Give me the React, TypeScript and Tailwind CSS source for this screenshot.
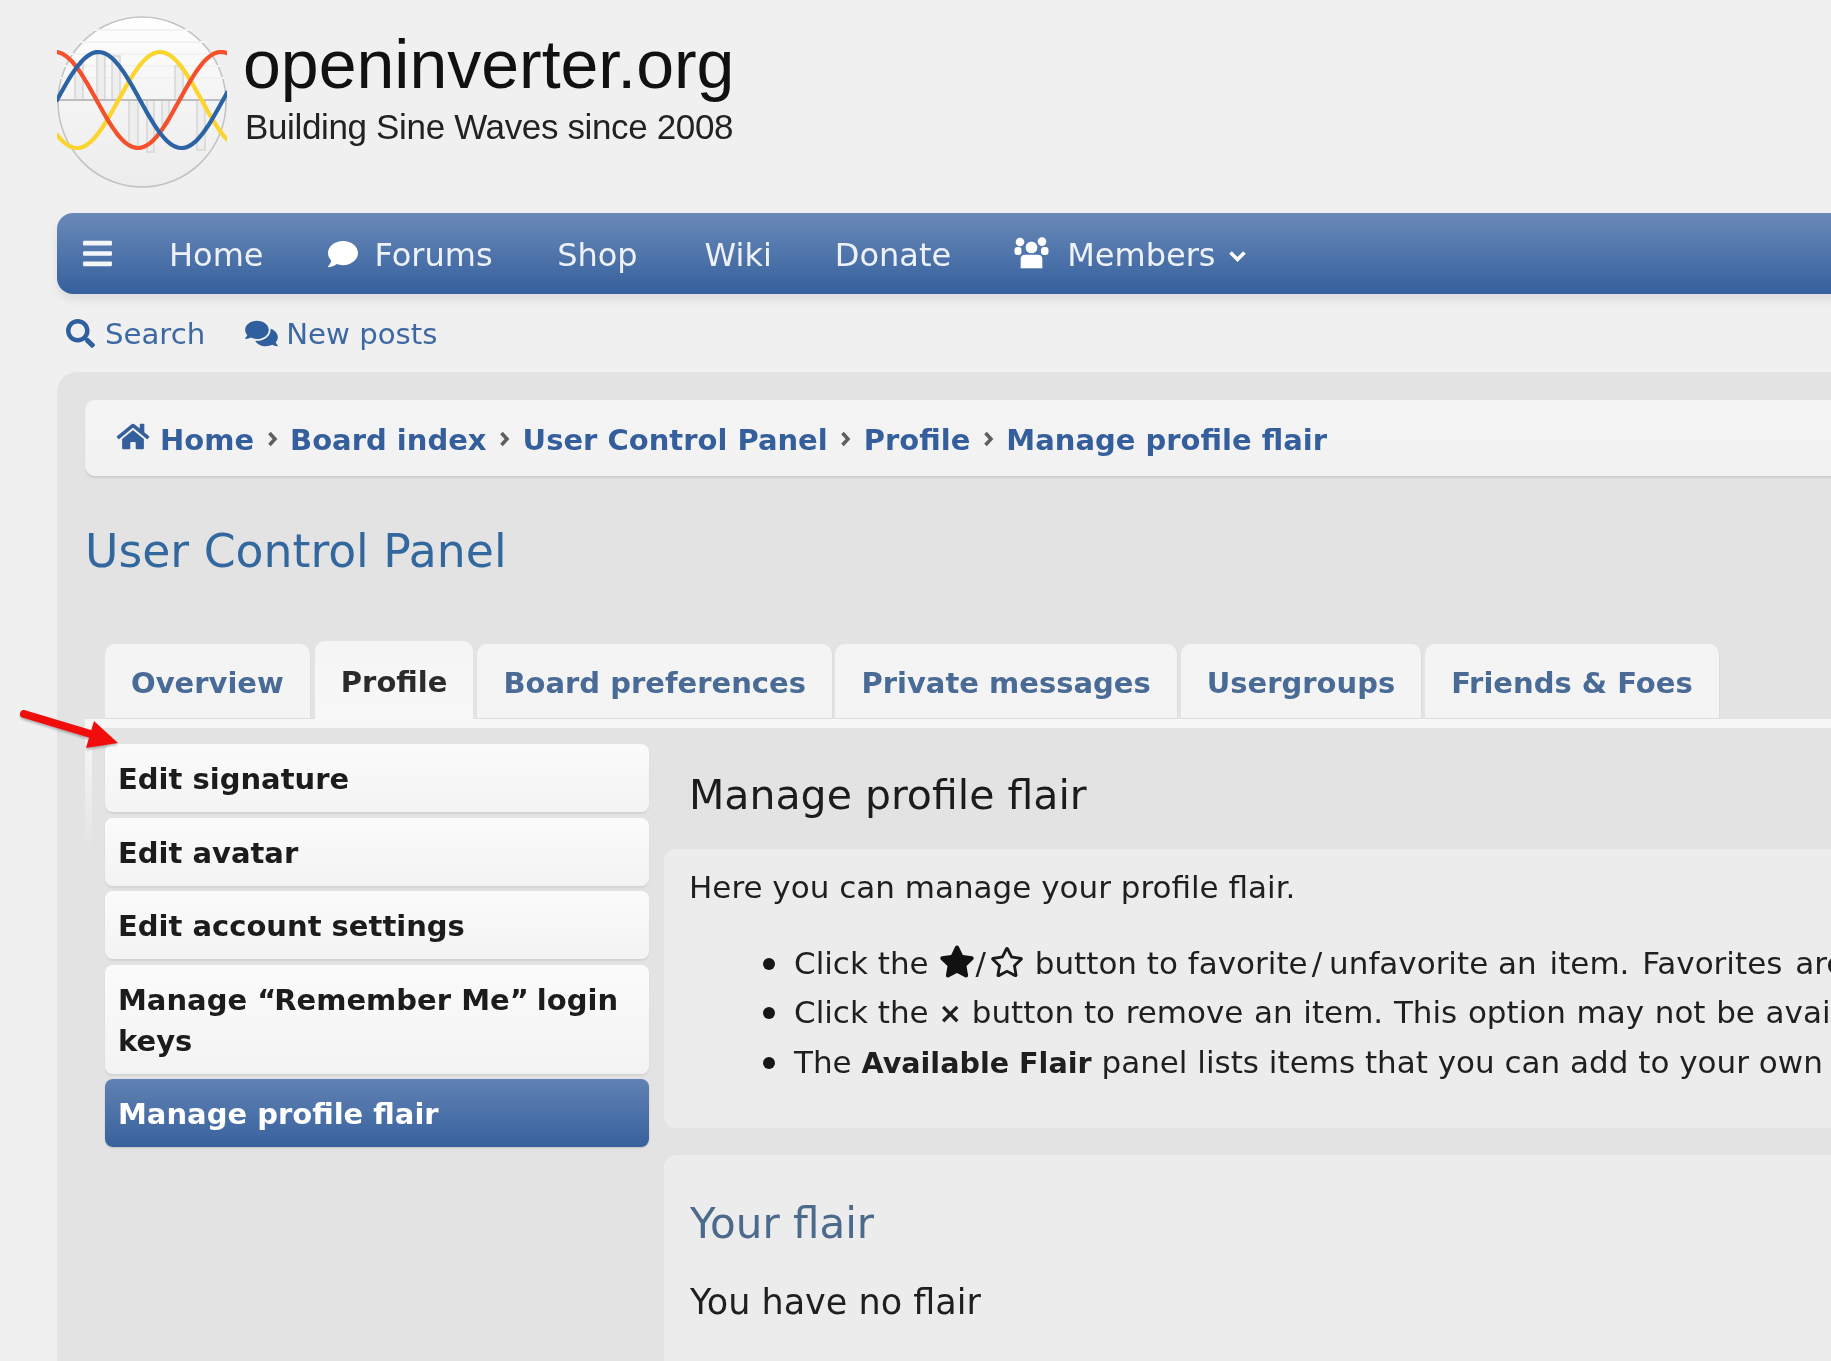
import React from "react";
import { FaBars, FaComment, FaSearch, FaComments, FaHome, FaStar, FaRegStar } from "react-icons/fa";

function wave(fn: (x: number) => number) {
  const pts: string[] = [];
  for (let x = 57; x <= 227; x += 2) pts.push(`${x - 57},${(fn(x) - 16).toFixed(1)}`);
  return "M" + pts.join(" L");
}
const T = 166;
const blue = wave((x) => 100 - 48 * Math.sin((2 * Math.PI * (x - 57)) / T));
const red = wave((x) => 100 + 48 * Math.cos((2 * Math.PI * (x - 138)) / T));
const yellow = wave((x) => 100 + 48 * Math.cos((2 * Math.PI * (x - 77)) / T));

function Logo() {
  return (
    <svg width="170" height="172" viewBox="0 0 170 172" className="shrink-0">
      <defs>
        <linearGradient id="lg" x1="0" y1="0" x2="0" y2="1">
          <stop offset="0" stopColor="#ffffff" />
          <stop offset="0.5" stopColor="#f4f4f4" />
          <stop offset="1" stopColor="#ececec" />
        </linearGradient>
      </defs>
      <ellipse cx="85" cy="86" rx="84" ry="85" fill="url(#lg)" stroke="#c2c2c2" strokeWidth="1.5" />
      <g stroke="#f2f2f2" strokeWidth="2">
        <path d="M35 14H135M20 26H150M10 38H160M5 50H165M2 62H168" />
      </g>
      <g stroke="#d6d6d6" strokeWidth="1.5" fill="#eeeeee">
        <path d="M18 84V48h8v36zM40 84V36h8v48zM55 84V40h8v44zM118 84V50h8v34z" />
        <path d="M72 84h9v46h-9zM90 84h7v52h-7zM105 84h7v24h-7zM140 84h8v50h-8z" />
      </g>
      <path d="M0 84H170" stroke="#bdbdbd" strokeWidth="2" />
      <g fill="none" strokeWidth="4.2" strokeLinecap="round">
        <path d={yellow} stroke="#fbd52e" />
        <path d={red} stroke="#f4502c" />
        <path d={blue} stroke="#2c63a4" />
      </g>
    </svg>
  );
}

function UsersIcon() {
  return (
    <svg width="35" height="32" viewBox="0 0 35 32" className="ml-[63px] shrink-0 mb-[2px]">
      <g fill="#ffffff">
        <circle cx="6" cy="5" r="4.3" />
        <circle cx="28" cy="4.6" r="4.3" />
        <rect x="0.5" y="10" width="7" height="8" rx="3" />
        <rect x="27" y="10" width="7.5" height="8" rx="3" />
      </g>
      <g fill="#ffffff" stroke="#4d76ac" strokeWidth="1.4">
        <circle cx="17.5" cy="10.5" r="6.6" />
        <path d="M6 32V22c0-3 2-5 5-5h13c3 0 5 2 5 5v10z" />
      </g>
    </svg>
  );
}

const navItem = "text-[32px] leading-none text-[#eef2f8] whitespace-nowrap pt-[2px]";

function Nav() {
  return (
    <div className="h-[81px] rounded-l-[16px] bg-gradient-to-b from-[#6a8ab8] to-[#35609d] shadow-[0_6px_10px_rgba(0,0,0,0.08)] flex items-center pl-[24px]">
      <FaBars className="w-[33px] h-[33px] text-[#f4f6fa]" />
      <span className={`${navItem} ml-[55px]`}>Home</span>
      <FaComment className="ml-[62px] w-[34px] h-[30px] text-white" />
      <span className={`${navItem} ml-[15px]`}>Forums</span>
      <span className={`${navItem} ml-[64.5px]`}>Shop</span>
      <span className={`${navItem} ml-[67px]`}>Wiki</span>
      <span className={`${navItem} ml-[63px]`}>Donate</span>
      <UsersIcon />
      <span className={`${navItem} ml-[18px]`}>Members</span>
      <svg width="19" height="13" viewBox="0 0 19 13" className="ml-[12px] mt-[6px]">
        <path d="M2.5 2.5 L9.5 9.5 L16.5 2.5" fill="none" stroke="#ffffff" strokeWidth="3.6" />
      </svg>
    </div>
  );
}

function Chevron() {
  return (
    <svg width="11" height="16" viewBox="0 0 11 16" className="mx-[12.5px] mt-[1px] shrink-0">
      <path d="M2.5 2 L8 8 L2.5 14" fill="none" stroke="#5c5f63" strokeWidth="3.5" />
    </svg>
  );
}

const crumb = "text-[29px] font-bold text-[#345f9c] whitespace-nowrap leading-none pt-[4px]";

function Tab({ label, active, extra }: { label: string; active?: boolean; extra?: string }) {
  return active ? (
    <div className={`h-[87px] pt-[23px] px-[26px] rounded-t-[10px] bg-gradient-to-b from-[#f5f5f5] to-[#f8f8f8] text-[29px] font-bold leading-[36px] text-[#2b2b2b] ${extra ?? ""}`}>{label}</div>
  ) : (
    <div className={`h-[75px] mb-[9px] pt-[21px] px-[26px] rounded-t-[10px] bg-[#f4f4f4] border-r border-b border-[#dcdcdc] text-[29px] font-bold leading-[36px] text-[#4a6b96] ${extra ?? ""}`}>{label}</div>
  );
}

function SideItem({ children, active }: { children: React.ReactNode; active?: boolean }) {
  return (
    <div
      className={
        active
          ? "rounded-[8px] px-[13px] pt-[15px] pb-[12px] text-[29px] font-bold leading-[41px] text-white bg-gradient-to-b from-[#6081b3] to-[#38629e] shadow-[0_1px_2px_rgba(0,0,0,0.15)]"
          : "rounded-[8px] px-[13px] pt-[15px] pb-[12px] text-[29px] font-bold leading-[41px] text-[#1c1c1c] bg-gradient-to-b from-[#fbfbfb] to-[#f3f3f3] shadow-[0_2px_2px_rgba(0,0,0,0.07)]"
      }
    >
      {children}
    </div>
  );
}

function Bullet({ children }: { children: React.ReactNode }) {
  return (
    <li className="flex items-center">
      <span className="w-[12px] h-[12px] rounded-full bg-[#161616] mr-[19px] shrink-0" />
      <span>{children}</span>
    </li>
  );
}

export default function App() {
  return (
    <div className="w-[1831px] h-[1361px] overflow-hidden bg-[#f0f0f0] font-['DejaVu_Sans',sans-serif] relative blur-[0.5px]">
      <div className="w-[2100px] pl-[57px]">
        <header className="h-[213px] pt-[16px] flex items-start">
          <Logo />
          <div className="ml-[16px] font-['Liberation_Sans',sans-serif] text-[#111111]">
            <div className="text-[68px] leading-[76px] mt-[10px] whitespace-nowrap">openinverter.org</div>
            <div className="text-[35px] leading-[40px] mt-[5px] ml-[2px] tracking-[-0.35px] text-[#222222] whitespace-nowrap">Building Sine Waves since 2008</div>
          </div>
        </header>
        <Nav />
        <div className="h-[78px] flex items-center pl-[9px] text-[#3d68a3] text-[29.2px]">
          <FaSearch className="w-[29px] h-[29px] text-[#2f5f9e]" />
          <span className="ml-[10px] pt-[3px]">Search</span>
          <FaComments className="ml-[40px] w-[33px] h-[29px] text-[#2f5f9e]" />
          <span className="ml-[8px] pt-[3px]">New posts</span>
        </div>
        <main className="bg-[#e3e3e3] rounded-tl-[20px] pl-[28px] pt-[28px] h-[989px]">
          <div className="h-[76px] rounded-l-[10px] bg-gradient-to-b from-[#f4f4f4] to-[#f2f2f2] shadow-[0_2px_2px_rgba(0,0,0,0.1)] flex items-center pl-[31px]">
            <FaHome className="w-[34px] h-[29px] text-[#345f9c] mr-[10px] mb-[4px]" />
            <span className={crumb}>Home</span>
            <Chevron />
            <span className={crumb}>Board index</span>
            <Chevron />
            <span className={crumb}>User Control Panel</span>
            <Chevron />
            <span className={crumb}>Profile</span>
            <Chevron />
            <span className={crumb}>Manage profile flair</span>
          </div>
          <h2 className="mt-[46px] h-[60px] text-[45.7px] leading-[60px] text-[#33689f]">User Control Panel</h2>
          <div className="mt-[59px] flex items-end pl-[20px]">
            <Tab label="Overview" />
            <Tab label="Profile" active extra="ml-[4px]" />
            <Tab label="Board preferences" extra="ml-[4px]" />
            <Tab label="Private messages" extra="ml-[2.5px]" />
            <Tab label="Usergroups" extra="ml-[3px]" />
            <Tab label="Friends & Foes" extra="ml-[3px]" />
          </div>
          <div className="relative border-t-[9px] border-[#f7f7f7] mt-[-9px] flex pl-[20px]">
            <div className="absolute left-0 top-0 w-[7px] h-[122px] bg-gradient-to-b from-[#f7f7f7] to-transparent" />
            <aside className="w-[544px] shrink-0 mt-[16px] flex flex-col gap-[5.5px]">
              <SideItem>Edit signature</SideItem>
              <SideItem>Edit avatar</SideItem>
              <SideItem>Edit account settings</SideItem>
              <SideItem>
                Manage <span className="tracking-[-2px]">“</span>Remember Me<span className="tracking-[-2px]">”</span> login keys
              </SideItem>
              <SideItem active>Manage profile flair</SideItem>
            </aside>
            <section className="ml-[15px] flex-1 text-[#1f1f1f] text-[31px]">
              <h3 className="pl-[25px] h-[121px] pt-[40px] text-[41px] leading-[54px] text-[#1c1c1c]">Manage profile flair</h3>
              <div className="rounded-l-[12px] bg-[#ececec] h-[279px] pt-[16px] pl-[25px]">
                <p className="leading-[44px]">Here you can manage your profile flair.</p>
                <ul className="mt-[30px] pl-[74px] leading-[49px] whitespace-nowrap">
                  <Bullet>
                    Click the <FaStar className="inline ml-[1px] w-[36px] h-[33px] align-[-4px] text-[#111111]" />/<FaRegStar className="inline ml-[4px] mr-[1px] w-[34px] h-[32px] align-[-4px] text-[#1a1a1a]" /> button to favorite<span className="ml-[4px] mr-[7px]">/</span>unfavorite <span className="[word-spacing:3px]">an item. Favorites are shown first</span>
                  </Bullet>
                  <Bullet>
                    Click the <b className="text-[28px]">×</b> button <span className="[word-spacing:0.8px]">to remove an item. This option may not be available</span>
                  </Bullet>
                  <Bullet>
                    The <b className="text-[28.6px]">Available Flair</b> panel lists items that you can add to your own profile
                  </Bullet>
                </ul>
              </div>
              <div className="mt-[27px] rounded-l-[12px] bg-[#ececec] h-[300px] pt-[44px] pl-[26px]">
                <h3 className="text-[42px] leading-[50px] text-[#4c6a8c]">Your flair</h3>
                <p className="mt-[31px] text-[35px] leading-[44px]">You have no flair</p>
              </div>
            </section>
          </div>
        </main>
      </div>
      <svg className="absolute left-[18px] top-[705px] drop-shadow-[0_2px_1px_rgba(0,0,0,0.25)]" width="105" height="48" viewBox="0 0 105 48">
        <path d="M6 9 L76 30" stroke="#f20d0d" strokeWidth="8" strokeLinecap="round" />
        <path d="M76 16 L100 38 L68 43 Z" fill="#f20d0d" />
      </svg>
    </div>
  );
}
